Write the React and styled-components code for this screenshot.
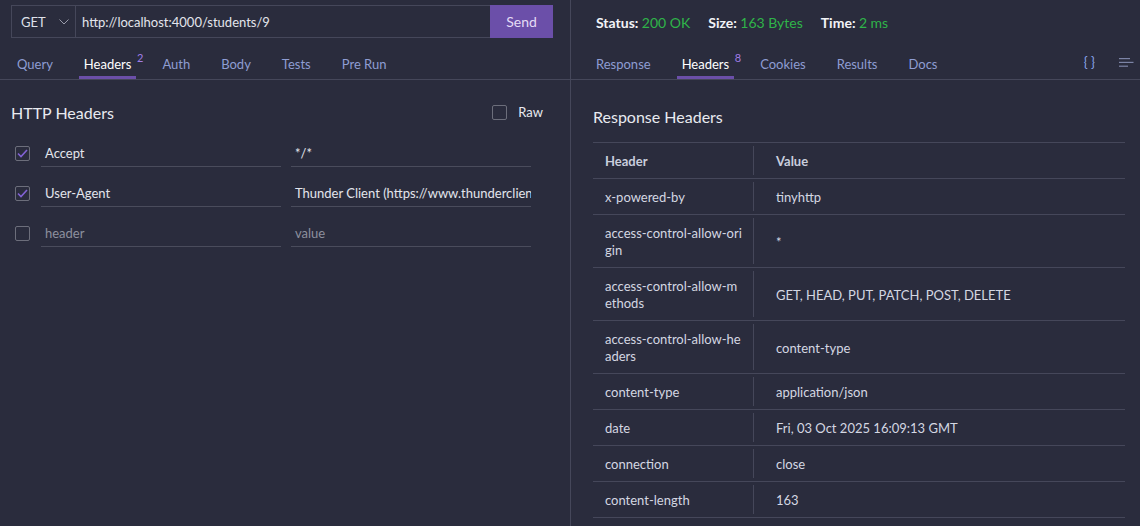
import React from 'react';
import styled, { createGlobalStyle } from 'styled-components';

const GlobalStyle = createGlobalStyle`
  html, body {
    margin: 0;
    padding: 0;
    background: #2a2c3d;
  }
  body {
    font-family: Lato, 'Liberation Sans', sans-serif;
    font-size: 13px;
    color: #d4d7e2;
  }
`;

const requestHeaders = [
  { key: 'Accept', value: '*/*', checked: true },
  { key: 'User-Agent', value: 'Thunder Client (https://www.thunderclient.com)', checked: true },
  { key: '', value: '', checked: false },
];

const responseHeaders = [
  ['x-powered-by', 'tinyhttp'],
  ['access-control-allow-origin', '*'],
  ['access-control-allow-methods', 'GET, HEAD, PUT, PATCH, POST, DELETE'],
  ['access-control-allow-headers', 'content-type'],
  ['content-type', 'application/json'],
  ['date', 'Fri, 03 Oct 2025 16:09:13 GMT'],
  ['connection', 'close'],
  ['content-length', '163'],
];

function Check({ checked }) {
  return (
    <CheckBox>
      {checked && (
        <svg width="11" height="9" viewBox="0 0 11 9">
          <polyline points="1,4.5 4,7.5 10,1" fill="none" stroke="#8262d6" strokeWidth="1.6" />
        </svg>
      )}
    </CheckBox>
  );
}

function Tab({ active, count, children }) {
  return (
    <TabItem $active={active}>
      {children}
      {count && <Count>{count}</Count>}
    </TabItem>
  );
}

function App() {
  return (
    <>
      <GlobalStyle />
      <Page>
        <LeftPanel>
          <RequestBar>
            <MethodSelect>
              GET
              <svg width="10" height="6" viewBox="0 0 10 6">
                <polyline points="0.5,0.5 5,5 9.5,0.5" fill="none" stroke="#9a9cab" strokeWidth="1" />
              </svg>
            </MethodSelect>
            <UrlField>http://localhost:4000/students/9</UrlField>
            <SendButton>Send</SendButton>
          </RequestBar>
          <TabBar $pad={12}>
            <Tab>Query</Tab>
            <Tab active count="2">Headers</Tab>
            <Tab>Auth</Tab>
            <Tab>Body</Tab>
            <Tab>Tests</Tab>
            <Tab>Pre Run</Tab>
          </TabBar>
          <HeadingRow>
            <SectionTitle>HTTP Headers</SectionTitle>
            <RawToggle>
              <Check />
              Raw
            </RawToggle>
          </HeadingRow>
          {requestHeaders.map((h, i) => (
            <HeaderRow key={i}>
              <Check checked={h.checked} />
              <Field $placeholder={!h.key}>{h.key || 'header'}</Field>
              <Field $placeholder={!h.value}>{h.value || 'value'}</Field>
            </HeaderRow>
          ))}
        </LeftPanel>

        <RightPanel>
          <StatusBar>
            <Stat>Status: <StatValue>200 OK</StatValue></Stat>
            <Stat>Size: <StatValue>163 Bytes</StatValue></Stat>
            <Stat>Time: <StatValue>2 ms</StatValue></Stat>
          </StatusBar>
          <TabBar $pad={20}>
            <Tab>Response</Tab>
            <Tab active count="8">Headers</Tab>
            <Tab>Cookies</Tab>
            <Tab>Results</Tab>
            <Tab>Docs</Tab>
            <TabTools>
              <Braces>{'{ }'}</Braces>
              <svg width="15" height="9" viewBox="0 0 15 9">
                <g stroke="#7c84a6" strokeWidth="1.2">
                  <line x1="0" y1="0.6" x2="11" y2="0.6" />
                  <line x1="0" y1="4.4" x2="14.5" y2="4.4" />
                  <line x1="0" y1="8.2" x2="9" y2="8.2" />
                </g>
              </svg>
            </TabTools>
          </TabBar>
          <ResponseTitle>Response Headers</ResponseTitle>
          <Table>
            <TableRow $head>
              <KeyCell>Header</KeyCell>
              <ValueCell>Value</ValueCell>
            </TableRow>
            {responseHeaders.map(([k, v]) => (
              <TableRow key={k}>
                <KeyCell>{k}</KeyCell>
                <ValueCell>{v}</ValueCell>
              </TableRow>
            ))}
          </Table>
        </RightPanel>
      </Page>
    </>
  );
}

const Page = styled.div`
  display: flex;
  height: 526px;
  overflow: hidden;
`;

const LeftPanel = styled.section`
  width: 570px;
  flex-shrink: 0;
  border-right: 1px solid #45475a;
`;

const RightPanel = styled.section`
  flex: 1;
  min-width: 0;
`;

const RequestBar = styled.div`
  display: flex;
  height: 33px;
  margin: 5px 17px 0 11px;
`;

const MethodSelect = styled.div`
  width: 65px;
  box-sizing: border-box;
  display: flex;
  align-items: center;
  justify-content: space-between;
  padding: 0 6px 0 9px;
  border: 1px solid #45475a;
  font-size: 13px;
  color: #dfe1ea;
`;

const UrlField = styled.div`
  flex: 1;
  display: flex;
  align-items: center;
  padding-left: 6px;
  border-top: 1px solid #45475a;
  border-bottom: 1px solid #45475a;
  color: #e3e5ec;
  font-size: 13px;
`;

const SendButton = styled.button`
  width: 63px;
  border: none;
  background: #6b4fa9;
  color: #e4dcf6;
  font-family: inherit;
  font-size: 14px;
  cursor: pointer;
`;

const TabBar = styled.div`
  display: flex;
  align-items: flex-end;
  gap: 21px;
  height: 41px;
  padding-left: ${(p) => p.$pad}px;
  border-bottom: 1px solid #45475a;
`;

const TabItem = styled.div`
  position: relative;
  padding: 0 5px 2px;
  line-height: 20px;
  font-size: 13px;
  color: ${(p) => (p.$active ? '#ffffff' : '#8e9dd3')};
  border-bottom: 3px solid ${(p) => (p.$active ? '#6b4fa9' : 'transparent')};
`;

const Count = styled.span`
  position: absolute;
  top: -3px;
  right: -7px;
  font-size: 11px;
  line-height: 14px;
  color: #a07ce6;
`;

const TabTools = styled.div`
  margin-left: auto;
  display: flex;
  align-items: center;
  gap: 24px;
  height: 34px;
  padding-right: 6px;
`;

const Braces = styled.span`
  color: #8aa6ea;
  font-size: 13px;
`;

const HeadingRow = styled.div`
  display: flex;
  align-items: center;
  justify-content: space-between;
  height: 32px;
  margin: 16px 27px 5px 11px;
`;

const SectionTitle = styled.h2`
  margin: 0;
  font-size: 16px;
  font-weight: 400;
  color: #e8eaf0;
`;

const RawToggle = styled.label`
  display: flex;
  align-items: center;
  gap: 11px;
  font-size: 13px;
  color: #e8eaf0;
`;

const CheckBox = styled.span`
  width: 15px;
  height: 15px;
  box-sizing: border-box;
  border: 1px solid #6c6e7b;
  border-radius: 2px;
  display: inline-flex;
  align-items: center;
  justify-content: center;
`;

const HeaderRow = styled.div`
  display: flex;
  align-items: center;
  height: 40px;
  padding-left: 15px;
  gap: 11px;

  & > div + div {
    margin-left: -1px;
  }
`;

const Field = styled.div`
  width: 240px;
  height: 28px;
  box-sizing: border-box;
  padding: 0 0 0 4px;
  display: flex;
  align-items: center;
  border-bottom: 1px solid #4a4c5c;
  white-space: nowrap;
  overflow: hidden;
  font-size: 13px;
  color: ${(p) => (p.$placeholder ? '#8d909e' : '#e3e5ec')};
`;

const StatusBar = styled.div`
  display: flex;
  align-items: center;
  gap: 18px;
  height: 32px;
  padding: 6px 0 0 25px;
`;

const Stat = styled.span`
  font-size: 14px;
  font-weight: 700;
  color: #f2f3f7;
`;

const StatValue = styled.span`
  font-weight: 400;
  color: #2fb449;
`;

const ResponseTitle = styled.h2`
  margin: 20px 0 0 22px;
  height: 34px;
  line-height: 34px;
  font-size: 16px;
  font-weight: 400;
  color: #e8eaf0;
`;

const Table = styled.div`
  margin: 8px 15px 0 22px;
  border-top: 1px solid #45475a;
`;

const TableRow = styled.div`
  display: grid;
  grid-template-columns: 160px 1fr;
  border-bottom: 1px solid #45475a;
  font-size: 13px;
  line-height: 17px;
  font-weight: ${(p) => (p.$head ? 700 : 400)};
  color: ${(p) => (p.$head ? '#c9cedd' : '#d4d7e2')};
`;

const KeyCell = styled.div`
  padding: 10px 11px 8px 12px;
  word-break: break-all;
`;

const ValueCell = styled.div`
  display: flex;
  align-items: center;
  margin: 3px 0;
  padding: 7px 0 5px 22px;
  border-left: 1px solid #45475a;
`;

export default App;
